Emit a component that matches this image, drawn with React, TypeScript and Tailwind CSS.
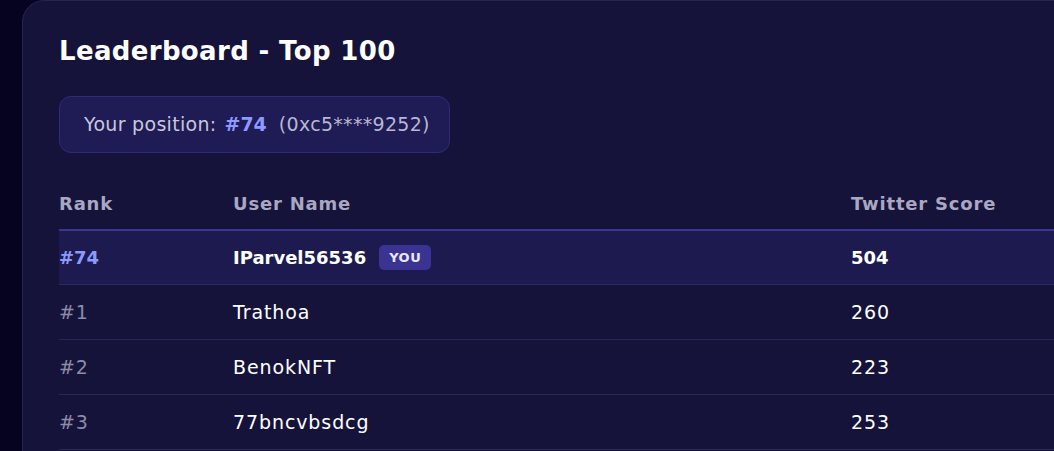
const rows = [
    { rank: "#1", name: "Trathoa", score: 260 },
    { rank: "#2", name: "BenokNFT", score: 223 },
    { rank: "#3", name: "77bncvbsdcg", score: 253 },
];

export default function App() {
    return (
        <div
            className="h-screen w-full overflow-hidden bg-[#050320] pl-[22px]"
            style={{ fontFamily: "'DejaVu Sans', 'Noto Sans', sans-serif" }}
        >
            {/* Leaderboard card */}
            <div className="w-[1100px] h-[600px] rounded-tl-[22px] border border-[#27234f] bg-[#16133a] pl-[36px] pt-[32px]">
                <h2 className="text-[26px] leading-[36px] font-bold tracking-[0.35px] text-white">Leaderboard - Top 100</h2>

                {/* Your position */}
                <div className="mt-[27px] flex h-[57px] w-[391px] items-center whitespace-nowrap rounded-[12px] border border-[#302b78] bg-[#1f1b55] pl-[24px] text-[19px] tracking-[0.3px] text-[#c9c7dc]">
                    <span className="shrink-0">Your position:</span>
                    <span className="ml-[8px] shrink-0 font-bold tracking-[0px] text-[#8e98ff]">#74</span>
                    <span className="ml-[12px] shrink-0 text-[#b9b7d2]">(0xc5****9252)</span>
                </div>

                {/* Table */}
                <div className="mt-[24px]">
                    <div className="grid grid-cols-[174px_618px_1fr] h-[52px] items-center text-[18px] font-bold tracking-[0.8px] text-[#a9a7c2]">
                        <div>Rank</div>
                        <div>User Name</div>
                        <div>Twitter Score</div>
                    </div>

                    <div className="grid grid-cols-[174px_618px_1fr] h-[56px] items-center border-t-2 border-b border-t-[#3b3595] border-b-[#2c2866] bg-[#1d1a50] text-[18px] font-bold text-white">
                        <div className="text-[#8e98ff]">#74</div>
                        <div className="flex items-center gap-[13px]">
                            <span>IParvel56536</span>
                            <span className="rounded-[5px] bg-[#3a3391] px-[10px] py-[3px] text-[13px] font-semibold tracking-[0.5px] text-[#e9e8ff]">YOU</span>
                        </div>
                        <div>504</div>
                    </div>

                    {rows.map((r) => (
                        <div key={r.rank} className="grid grid-cols-[174px_618px_1fr] h-[55px] items-center border-b border-[#2a2659] text-[19px] tracking-[0.9px] text-white">
                            <div className="text-[#8d8ba8]">{r.rank}</div>
                            <div>{r.name}</div>
                            <div>{r.score}</div>
                        </div>
                    ))}
                </div>
            </div>
        </div>
    );
}
